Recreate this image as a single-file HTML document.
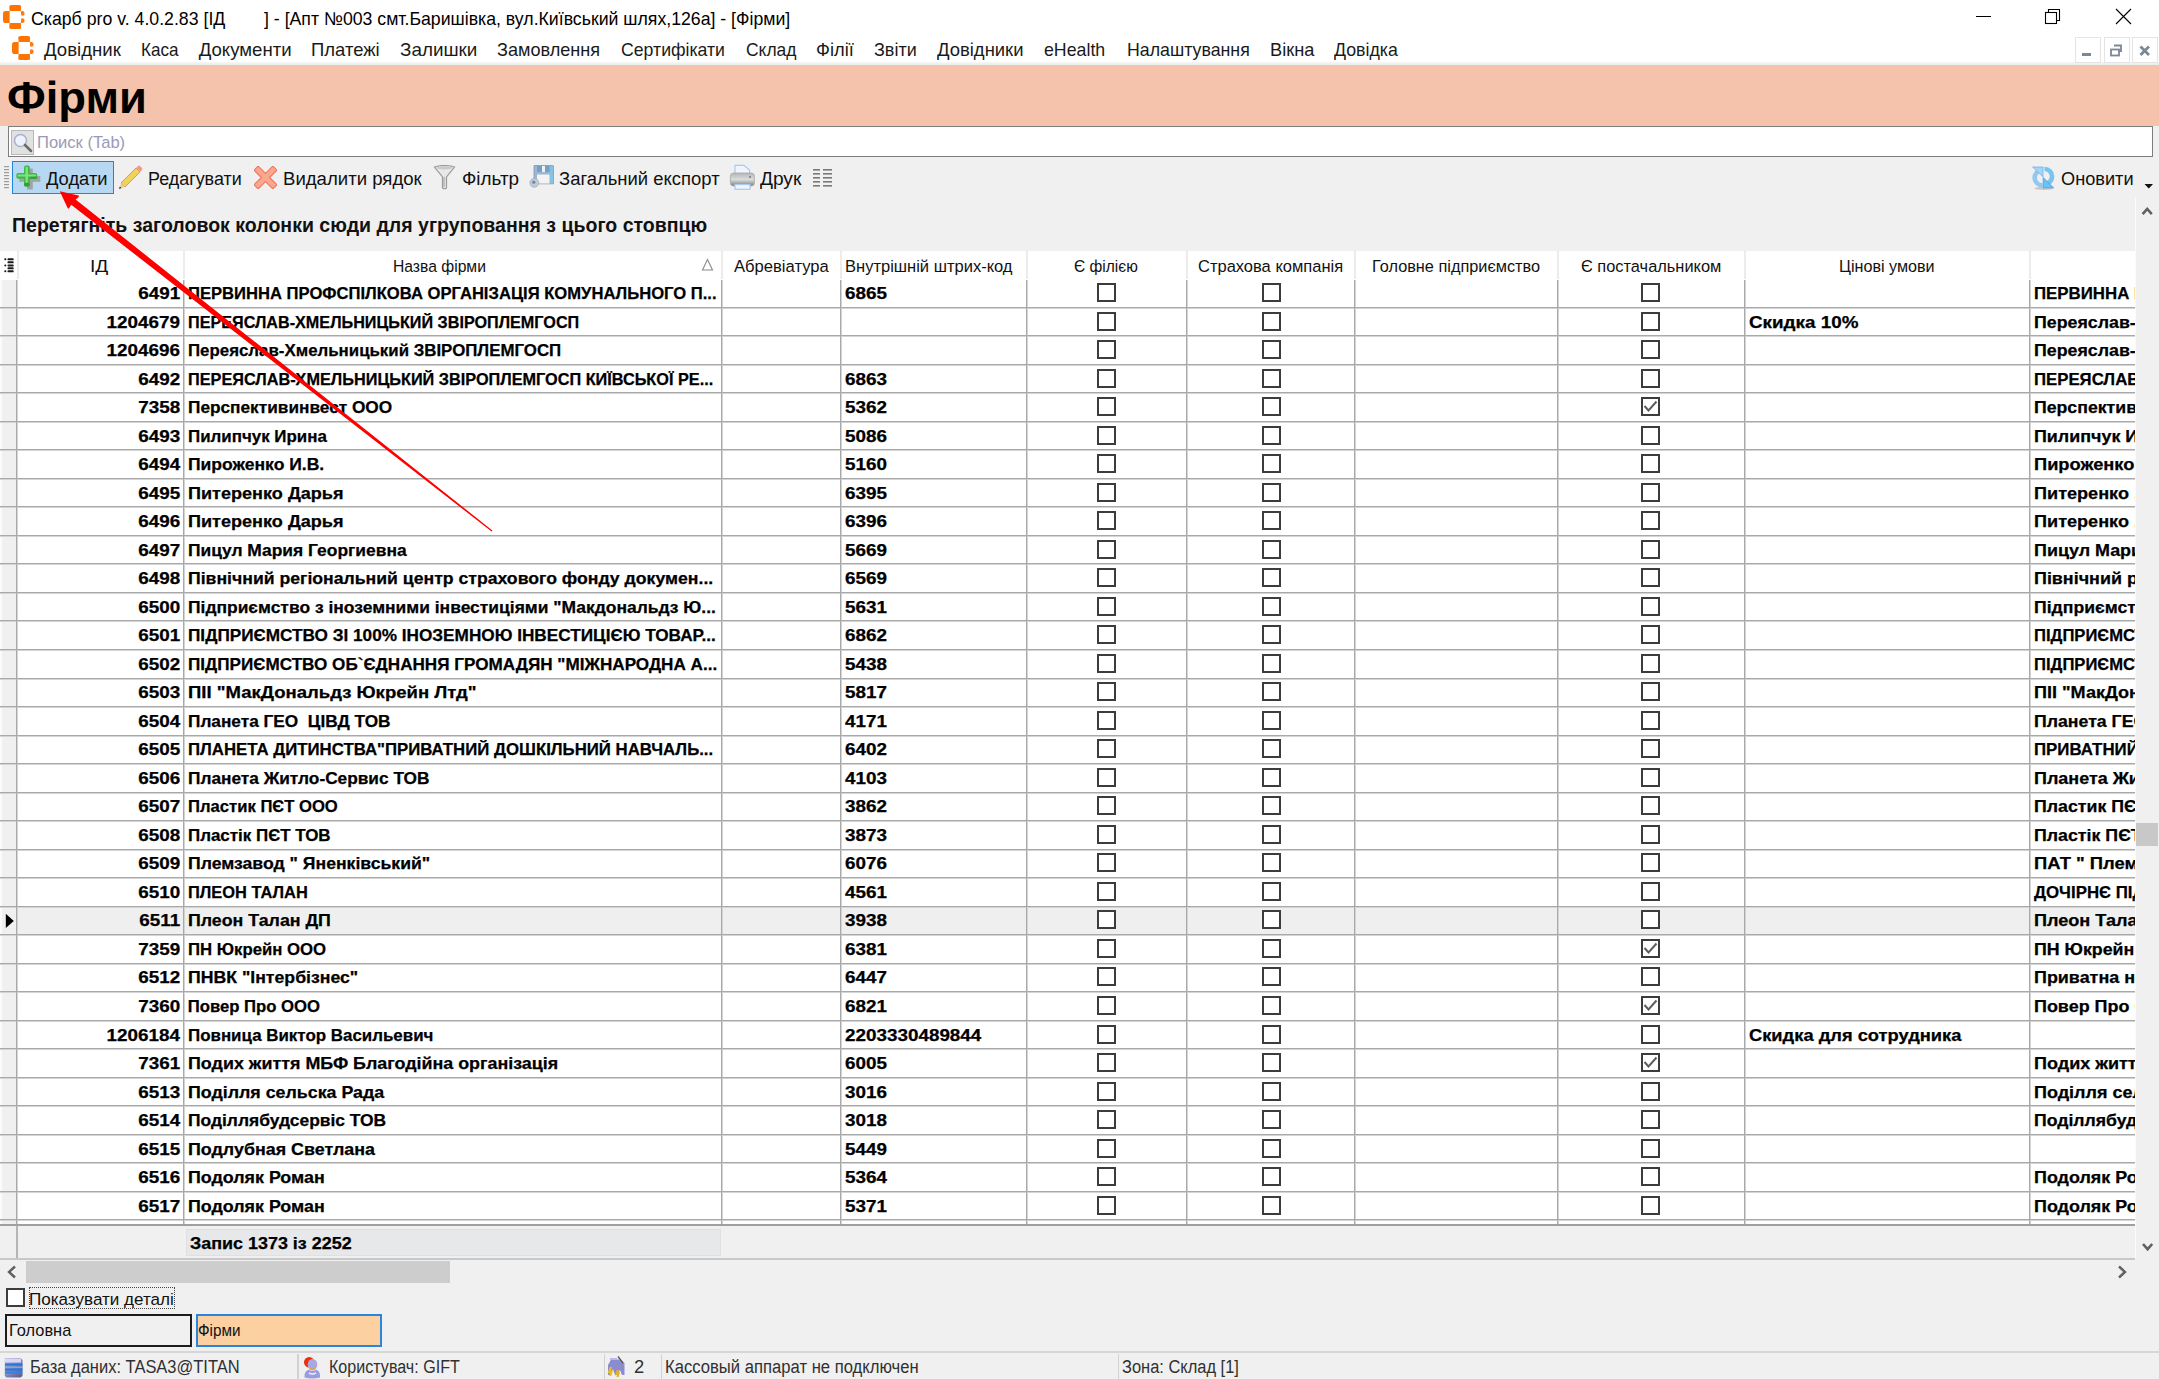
<!DOCTYPE html>
<html><head><meta charset="utf-8">
<style>
html,body{margin:0;padding:0}
body{width:2159px;height:1379px;position:relative;overflow:hidden;background:#f0f0f0;font-family:"Liberation Sans",sans-serif;color:#000}
.t{position:absolute;white-space:pre;line-height:1;transform-origin:0 0}
.b{-webkit-text-stroke:0.25px #000}
.a{position:absolute}
</style></head><body>
<!-- title + menu white -->
<div class="a" style="left:0;top:0;width:2159px;height:62px;background:#fff"></div>
<div class="a" style="left:0;top:62px;width:2159px;height:3px;background:linear-gradient(#f6f6f6,#ececec)"></div>
<!-- app icons -->
<svg class="a" style="left:3px;top:4.8px" width="22" height="25" viewBox="0 0 22 25">
 <path d="M6.6 6 L6.3 1.6 Q6.4 0 8.3 0 H16.2 Q18.1 0 18.1 1.6 L17.9 6 Z" fill="#ff7300"/>
 <path d="M6.6 6.1 V18 H2.6 Q0 18 0 15.2 V8.9 Q0 6.1 2.6 6.1 Z" fill="#ff7300"/>
 <path d="M6.6 18.1 L6.3 22.5 Q6.4 24 8.3 24 H16.2 Q18.1 24 18.1 22.5 L17.9 18.1 Z" fill="#ff7300"/>
 <path d="M18 6.1 H19.3 Q21.6 6.1 21.6 8.4 Q21.6 10.7 19.4 10.7 Q18 10.7 18 9.5 Z" fill="#ff7a10"/>
 <path d="M18 18 H19.3 Q21.6 18 21.6 15.7 Q21.6 13.3 19.4 13.3 Q18 13.3 18 14.6 Z" fill="#ff7a10"/>
</svg>
<svg class="a" style="left:11.9px;top:36.3px" width="22" height="25" viewBox="0 0 22 25">
 <path d="M6.6 6 L6.3 1.6 Q6.4 0 8.3 0 H16.2 Q18.1 0 18.1 1.6 L17.9 6 Z" fill="#ff7300"/>
 <path d="M6.6 6.1 V18 H2.6 Q0 18 0 15.2 V8.9 Q0 6.1 2.6 6.1 Z" fill="#ff7300"/>
 <path d="M6.6 18.1 L6.3 22.5 Q6.4 24 8.3 24 H16.2 Q18.1 24 18.1 22.5 L17.9 18.1 Z" fill="#ff7300"/>
 <path d="M18 6.1 H19.3 Q21.6 6.1 21.6 8.4 Q21.6 10.7 19.4 10.7 Q18 10.7 18 9.5 Z" fill="#ff7a10"/>
 <path d="M18 18 H19.3 Q21.6 18 21.6 15.7 Q21.6 13.3 19.4 13.3 Q18 13.3 18 14.6 Z" fill="#ff7a10"/>
</svg>
<!-- window controls -->
<div class="a" style="left:1976px;top:16px;width:15px;height:1.2px;background:#000"></div>
<svg class="a" style="left:2044px;top:8px" width="18" height="18" viewBox="0 0 18 18"><rect x="1.5" y="4.5" width="11" height="11" fill="none" stroke="#000" stroke-width="1.1"/><path d="M4.5 4.5 V1.5 H15.5 V12.5 H12.5" fill="none" stroke="#000" stroke-width="1.1"/></svg>
<svg class="a" style="left:2115px;top:8px" width="18" height="18" viewBox="0 0 18 18"><path d="M1 1 L16 16 M16 1 L1 16" stroke="#000" stroke-width="1.1"/></svg>
<!-- MDI buttons -->
<div class="a" style="left:2075px;top:37px;width:26px;height:26px;box-sizing:border-box;border:1px solid #e4e4e4;background:#fff"></div>
<div class="a" style="left:2103.5px;top:37px;width:26px;height:26px;box-sizing:border-box;border:1px solid #e4e4e4;background:#fff"></div>
<div class="a" style="left:2132px;top:37px;width:26px;height:26px;box-sizing:border-box;border:1px solid #e4e4e4;background:#fff"></div>
<div class="a" style="left:2082px;top:52.8px;width:9px;height:3.2px;background:#7a8794"></div>
<svg class="a" style="left:2108px;top:43.5px" width="16" height="16" viewBox="0 0 16 16"><path d="M6 1.5 H13 V7 H11" fill="none" stroke="#7a8794" stroke-width="1.8"/><rect x="3" y="5.5" width="8" height="6" fill="none" stroke="#7a8794" stroke-width="1.8"/></svg>
<svg class="a" style="left:2137px;top:43px" width="16" height="16" viewBox="0 0 16 16"><path d="M3.5 3.5 L12 12 M12 3.5 L3.5 12" stroke="#7a8794" stroke-width="2.8"/></svg>
<!-- salmon band -->
<div class="a" style="left:0;top:65px;width:2159px;height:61px;background:#f5c3ab"></div>
<!-- search box -->
<div class="a" style="left:7.5px;top:126.2px;width:2145px;height:31.3px;box-sizing:border-box;border:1.5px solid #7d7d7d;background:#fff"></div>
<div class="a" style="left:11px;top:130px;width:23px;height:24.5px;box-sizing:border-box;border:1px solid #b8b8b8;background:#e1e1e1"></div>
<svg class="a" style="left:12px;top:132px" width="22" height="22" viewBox="0 0 22 22"><circle cx="8.5" cy="8.5" r="6" fill="#eef2ff" stroke="#a9b4c8" stroke-width="1.6"/><path d="M13 13 L19 19" stroke="#6b6b6b" stroke-width="2.6" stroke-linecap="round"/></svg>
<!-- toolbar gripper -->
<svg class="a" style="left:4px;top:165px" width="6" height="24" viewBox="0 0 6 24"><g fill="#9a9a9a"><rect x="0" y="1" width="5" height="1.2"/><rect x="0" y="4" width="5" height="1.2"/><rect x="0" y="7" width="5" height="1.2"/><rect x="0" y="10" width="5" height="1.2"/><rect x="0" y="13" width="5" height="1.2"/><rect x="0" y="16" width="5" height="1.2"/><rect x="0" y="19" width="5" height="1.2"/><rect x="0" y="22" width="5" height="1.2"/></g></svg>
<!-- Додати button highlight -->
<div class="a" style="left:12.3px;top:161.2px;width:101.5px;height:32.4px;box-sizing:border-box;border:1.6px solid #1f86de;background:#b6d8f3"></div>
<!-- plus icon -->
<svg class="a" style="left:16px;top:165px" width="26" height="26" viewBox="0 0 26 26">
 <g fill="#a3a3a3"><rect x="3.3" y="11" width="21" height="5.8"/><rect x="11" y="3.6" width="5.8" height="20.8"/></g>
 <g fill="#43b84a"><rect x="0.3" y="8" width="21" height="5.8" rx="2"/><rect x="8" y="0.6" width="5.8" height="20.8" rx="2"/></g>
 <g fill="#7fe282"><rect x="1.6" y="9.4" width="18.4" height="2.2" rx="1"/><rect x="9.5" y="1.8" width="2.4" height="16" rx="1"/></g>
 <g fill="#2a9630" opacity="0.7"><rect x="8" y="18" width="5.8" height="3.4" rx="1.5"/><rect x="13.8" y="11.8" width="7.5" height="2" rx="1"/></g>
</svg>
<!-- pencil -->
<svg class="a" style="left:117px;top:164px" width="27" height="27" viewBox="0 0 27 27">
 <path d="M4 19 L19 4 L23 8 L8 23 Z" fill="#f2d25a" stroke="#c9a83a" stroke-width="1"/>
 <path d="M19 4 L21 2 Q22 1.2 23 2 L25 4 Q25.8 5 25 6 L23 8Z" fill="#f29a8a"/>
 <path d="M4 19 L8 23 L2 25 Z" fill="#f1c9a5"/><path d="M2.8 22.5 L4.5 24 L2 25Z" fill="#333"/>
</svg>
<!-- delete X -->
<svg class="a" style="left:254px;top:166px" width="23" height="23" viewBox="0 0 23 23"><g transform="rotate(45 11.5 11.5)"><path d="M8.6 -1.8 H14.4 V8.6 H24.8 V14.4 H14.4 V24.8 H8.6 V14.4 H-1.8 V8.6 H8.6 Z" fill="#f9a88e" stroke="#ea7a60" stroke-width="1.1" stroke-linejoin="round"/></g></svg>
<!-- funnel -->
<svg class="a" style="left:433px;top:165px" width="23" height="25" viewBox="0 0 23 25"><path d="M1.5 2 Q11.5 -1 21.5 2 L13.5 12 V23 Q11.5 24.5 9.5 23 V12 Z" fill="#e8e8e8" stroke="#9a9a9a" stroke-width="1.2"/><ellipse cx="11.5" cy="2.8" rx="8" ry="1.6" fill="#c9c9c9"/><path d="M11 12 V22" stroke="#c0c0c0" stroke-width="2"/></svg>
<!-- export floppy -->
<svg class="a" style="left:528px;top:164px" width="26" height="26" viewBox="0 0 26 26">
 <path d="M6 1.5 H24.5 Q25.5 1.5 25.5 2.5 V19.8 H6 Z" fill="#9fb6d2" stroke="#7f97b8" stroke-width="0.8"/>
 <rect x="22" y="2.5" width="3.2" height="17" fill="#86c3e2"/>
 <rect x="9" y="2" width="12.5" height="6" fill="#6fa0d0"/><rect x="14" y="2" width="3" height="6" fill="#f2f2f2"/>
 <rect x="9" y="10.5" width="12.5" height="9" fill="#f3f3f3"/>
 <circle cx="6.3" cy="18.8" r="4.4" fill="#c5cbd0" stroke="#a5adb3" stroke-width="0.8"/><circle cx="5.8" cy="18.2" r="1.6" fill="#5a8fc0"/>
</svg>
<!-- printer -->
<svg class="a" style="left:729px;top:164px" width="27" height="27" viewBox="0 0 27 27">
 <defs><linearGradient id="pg" x1="0" y1="0" x2="0" y2="1"><stop offset="0" stop-color="#b5b5b5"/><stop offset="0.5" stop-color="#dcdcdc"/><stop offset="1" stop-color="#7d7d7d"/></linearGradient></defs>
 <path d="M6 1.4 H15 L20.5 6 V10 H6Z" fill="#eef5ff" stroke="#a9c9ee" stroke-width="1.2"/>
 <rect x="1.4" y="9" width="24" height="13" rx="3.2" fill="url(#pg)" stroke="#a8a8a8" stroke-width="0.8"/>
 <circle cx="21" cy="13" r="1" fill="#777"/>
 <rect x="6" y="20.5" width="15" height="4.8" fill="#eef5ff" stroke="#a9c9ee" stroke-width="1.2"/>
</svg>
<!-- columns icon -->
<svg class="a" style="left:813px;top:168px" width="20" height="20" viewBox="0 0 20 20"><g fill="#7a7a7a"><rect x="0" y="1" width="7" height="1.6"/><rect x="0" y="5" width="7" height="1.6"/><rect x="0" y="9" width="7" height="1.6"/><rect x="0" y="13" width="7" height="1.6"/><rect x="0" y="17" width="7" height="1.6"/><rect x="10" y="1" width="9" height="1.6"/><rect x="10" y="5" width="9" height="1.6"/><rect x="10" y="9" width="9" height="1.6"/><rect x="10" y="13" width="9" height="1.6"/><rect x="10" y="17" width="9" height="1.6"/></g></svg>
<!-- refresh -->
<svg class="a" style="left:2026px;top:160px" width="34" height="34" viewBox="0 0 34 34">
 <ellipse cx="18" cy="28.3" rx="9.5" ry="1.6" fill="#c8c8c8"/>
 <path d="M15.5 10.2 A7.2 7.4 0 0 0 16.5 25.2" fill="none" stroke="#94c8ee" stroke-width="4.6"/>
 <path d="M6.6 7 H17 V16.8 Z" fill="#a3d6f6" stroke="#7ab2e0" stroke-width="0.8"/>
 <path d="M18.5 9 A7.2 7.4 0 0 1 19 24" fill="none" stroke="#78c4f2" stroke-width="4.6"/>
 <path d="M17.2 17.5 V27.8 H27.6 Z" fill="#64c6f8" stroke="#5d98cc" stroke-width="0.8"/>
</svg>
<!-- toolbar overflow -->
<svg class="a" style="left:2143px;top:181px" width="12" height="9" viewBox="0 0 12 9"><path d="M1.5 3 H10 L5.75 7.5Z" fill="#111"/></svg>
<!-- vertical scrollbar -->
<div class="a" style="left:2134.5px;top:197px;width:1.5px;height:1062px;background:#fbfbfb"></div>
<svg class="a" style="left:2139px;top:204px" width="16" height="14" viewBox="0 0 16 14"><path d="M3.6 10.2 L8.2 5 L12.8 10.2" fill="none" stroke="#606060" stroke-width="2.6"/></svg>
<div class="a" style="left:2136px;top:822.8px;width:22px;height:23.5px;background:#c8c8c8"></div>
<svg class="a" style="left:2139px;top:1240px" width="16" height="14" viewBox="0 0 16 14"><path d="M4 4 L8.6 9.2 L13.2 4" fill="none" stroke="#606060" stroke-width="2.6"/></svg>
<div style="position:absolute;left:0;top:251px;width:2135px;height:29px;background:#fff"></div>
<div style="position:absolute;left:0;top:280px;width:2135px;height:944px;background:#fff"></div>
<div style="position:absolute;left:0;top:280px;width:17px;height:944px;background:#f0f0f0"></div>
<div style="position:absolute;left:18px;top:907.44px;width:2117px;height:28.52px;background:#efefef"></div>
<div style="position:absolute;left:0;top:280px;width:1.5px;height:944px;background:#fbfbfb"></div>
<div style="position:absolute;left:0;top:308px;width:2135px;height:1px;background:#d4d4d4"></div>
<div style="position:absolute;left:0;top:336px;width:2135px;height:1px;background:#d4d4d4"></div>
<div style="position:absolute;left:0;top:365px;width:2135px;height:1px;background:#d4d4d4"></div>
<div style="position:absolute;left:0;top:393px;width:2135px;height:1px;background:#d4d4d4"></div>
<div style="position:absolute;left:0;top:422px;width:2135px;height:1px;background:#d4d4d4"></div>
<div style="position:absolute;left:0;top:450px;width:2135px;height:1px;background:#d4d4d4"></div>
<div style="position:absolute;left:0;top:479px;width:2135px;height:1px;background:#d4d4d4"></div>
<div style="position:absolute;left:0;top:507px;width:2135px;height:1px;background:#d4d4d4"></div>
<div style="position:absolute;left:0;top:536px;width:2135px;height:1px;background:#d4d4d4"></div>
<div style="position:absolute;left:0;top:564px;width:2135px;height:1px;background:#d4d4d4"></div>
<div style="position:absolute;left:0;top:593px;width:2135px;height:1px;background:#d4d4d4"></div>
<div style="position:absolute;left:0;top:621px;width:2135px;height:1px;background:#d4d4d4"></div>
<div style="position:absolute;left:0;top:650px;width:2135px;height:1px;background:#d4d4d4"></div>
<div style="position:absolute;left:0;top:679px;width:2135px;height:1px;background:#d4d4d4"></div>
<div style="position:absolute;left:0;top:707px;width:2135px;height:1px;background:#d4d4d4"></div>
<div style="position:absolute;left:0;top:736px;width:2135px;height:1px;background:#d4d4d4"></div>
<div style="position:absolute;left:0;top:764px;width:2135px;height:1px;background:#d4d4d4"></div>
<div style="position:absolute;left:0;top:793px;width:2135px;height:1px;background:#d4d4d4"></div>
<div style="position:absolute;left:0;top:821px;width:2135px;height:1px;background:#d4d4d4"></div>
<div style="position:absolute;left:0;top:850px;width:2135px;height:1px;background:#d4d4d4"></div>
<div style="position:absolute;left:0;top:878px;width:2135px;height:1px;background:#d4d4d4"></div>
<div style="position:absolute;left:0;top:907px;width:2135px;height:1px;background:#d4d4d4"></div>
<div style="position:absolute;left:0;top:935px;width:2135px;height:1px;background:#d4d4d4"></div>
<div style="position:absolute;left:0;top:964px;width:2135px;height:1px;background:#d4d4d4"></div>
<div style="position:absolute;left:0;top:992px;width:2135px;height:1px;background:#d4d4d4"></div>
<div style="position:absolute;left:0;top:1021px;width:2135px;height:1px;background:#d4d4d4"></div>
<div style="position:absolute;left:0;top:1049px;width:2135px;height:1px;background:#d4d4d4"></div>
<div style="position:absolute;left:0;top:1078px;width:2135px;height:1px;background:#d4d4d4"></div>
<div style="position:absolute;left:0;top:1106px;width:2135px;height:1px;background:#d4d4d4"></div>
<div style="position:absolute;left:0;top:1135px;width:2135px;height:1px;background:#d4d4d4"></div>
<div style="position:absolute;left:0;top:1163px;width:2135px;height:1px;background:#d4d4d4"></div>
<div style="position:absolute;left:0;top:1192px;width:2135px;height:1px;background:#d4d4d4"></div>
<div style="position:absolute;left:0;top:1220px;width:2135px;height:1px;background:#d4d4d4"></div>
<div style="position:absolute;left:0;top:1249px;width:2135px;height:1px;background:#d4d4d4"></div>
<div style="position:absolute;left:17px;top:280px;width:1px;height:944px;background:#d4d4d4"></div>
<div style="position:absolute;left:184px;top:280px;width:1px;height:944px;background:#d4d4d4"></div>
<div style="position:absolute;left:722px;top:280px;width:1px;height:944px;background:#d4d4d4"></div>
<div style="position:absolute;left:841px;top:280px;width:1px;height:944px;background:#d4d4d4"></div>
<div style="position:absolute;left:1027px;top:280px;width:1px;height:944px;background:#d4d4d4"></div>
<div style="position:absolute;left:1187px;top:280px;width:1px;height:944px;background:#d4d4d4"></div>
<div style="position:absolute;left:1355px;top:280px;width:1px;height:944px;background:#d4d4d4"></div>
<div style="position:absolute;left:1558px;top:280px;width:1px;height:944px;background:#d4d4d4"></div>
<div style="position:absolute;left:1745px;top:280px;width:1px;height:944px;background:#d4d4d4"></div>
<div style="position:absolute;left:2030px;top:280px;width:1px;height:944px;background:#d4d4d4"></div>
<div style="position:absolute;left:0;top:307px;width:2135px;height:1px;background:#a9a9a9"></div>
<div style="position:absolute;left:0;top:335px;width:2135px;height:1px;background:#a9a9a9"></div>
<div style="position:absolute;left:0;top:364px;width:2135px;height:1px;background:#a9a9a9"></div>
<div style="position:absolute;left:0;top:392px;width:2135px;height:1px;background:#a9a9a9"></div>
<div style="position:absolute;left:0;top:421px;width:2135px;height:1px;background:#a9a9a9"></div>
<div style="position:absolute;left:0;top:449px;width:2135px;height:1px;background:#a9a9a9"></div>
<div style="position:absolute;left:0;top:478px;width:2135px;height:1px;background:#a9a9a9"></div>
<div style="position:absolute;left:0;top:506px;width:2135px;height:1px;background:#a9a9a9"></div>
<div style="position:absolute;left:0;top:535px;width:2135px;height:1px;background:#a9a9a9"></div>
<div style="position:absolute;left:0;top:563px;width:2135px;height:1px;background:#a9a9a9"></div>
<div style="position:absolute;left:0;top:592px;width:2135px;height:1px;background:#a9a9a9"></div>
<div style="position:absolute;left:0;top:620px;width:2135px;height:1px;background:#a9a9a9"></div>
<div style="position:absolute;left:0;top:649px;width:2135px;height:1px;background:#a9a9a9"></div>
<div style="position:absolute;left:0;top:678px;width:2135px;height:1px;background:#a9a9a9"></div>
<div style="position:absolute;left:0;top:706px;width:2135px;height:1px;background:#a9a9a9"></div>
<div style="position:absolute;left:0;top:735px;width:2135px;height:1px;background:#a9a9a9"></div>
<div style="position:absolute;left:0;top:763px;width:2135px;height:1px;background:#a9a9a9"></div>
<div style="position:absolute;left:0;top:792px;width:2135px;height:1px;background:#a9a9a9"></div>
<div style="position:absolute;left:0;top:820px;width:2135px;height:1px;background:#a9a9a9"></div>
<div style="position:absolute;left:0;top:849px;width:2135px;height:1px;background:#a9a9a9"></div>
<div style="position:absolute;left:0;top:877px;width:2135px;height:1px;background:#a9a9a9"></div>
<div style="position:absolute;left:0;top:906px;width:2135px;height:1px;background:#a9a9a9"></div>
<div style="position:absolute;left:0;top:934px;width:2135px;height:1px;background:#a9a9a9"></div>
<div style="position:absolute;left:0;top:963px;width:2135px;height:1px;background:#a9a9a9"></div>
<div style="position:absolute;left:0;top:991px;width:2135px;height:1px;background:#a9a9a9"></div>
<div style="position:absolute;left:0;top:1020px;width:2135px;height:1px;background:#a9a9a9"></div>
<div style="position:absolute;left:0;top:1048px;width:2135px;height:1px;background:#a9a9a9"></div>
<div style="position:absolute;left:0;top:1077px;width:2135px;height:1px;background:#a9a9a9"></div>
<div style="position:absolute;left:0;top:1105px;width:2135px;height:1px;background:#a9a9a9"></div>
<div style="position:absolute;left:0;top:1134px;width:2135px;height:1px;background:#a9a9a9"></div>
<div style="position:absolute;left:0;top:1162px;width:2135px;height:1px;background:#a9a9a9"></div>
<div style="position:absolute;left:0;top:1191px;width:2135px;height:1px;background:#a9a9a9"></div>
<div style="position:absolute;left:0;top:1219px;width:2135px;height:1px;background:#a9a9a9"></div>
<div style="position:absolute;left:0;top:1248px;width:2135px;height:1px;background:#a9a9a9"></div>
<div style="position:absolute;left:16px;top:280px;width:1px;height:944px;background:#a9a9a9"></div>
<div style="position:absolute;left:183px;top:280px;width:1px;height:944px;background:#a9a9a9"></div>
<div style="position:absolute;left:721px;top:280px;width:1px;height:944px;background:#a9a9a9"></div>
<div style="position:absolute;left:840px;top:280px;width:1px;height:944px;background:#a9a9a9"></div>
<div style="position:absolute;left:1026px;top:280px;width:1px;height:944px;background:#a9a9a9"></div>
<div style="position:absolute;left:1186px;top:280px;width:1px;height:944px;background:#a9a9a9"></div>
<div style="position:absolute;left:1354px;top:280px;width:1px;height:944px;background:#a9a9a9"></div>
<div style="position:absolute;left:1557px;top:280px;width:1px;height:944px;background:#a9a9a9"></div>
<div style="position:absolute;left:1744px;top:280px;width:1px;height:944px;background:#a9a9a9"></div>
<div style="position:absolute;left:2029px;top:280px;width:1px;height:944px;background:#a9a9a9"></div>
<div style="position:absolute;left:183px;top:251px;width:2px;height:28px;background:#ececec"></div>
<div style="position:absolute;left:721px;top:251px;width:2px;height:28px;background:#ececec"></div>
<div style="position:absolute;left:840px;top:251px;width:2px;height:28px;background:#ececec"></div>
<div style="position:absolute;left:1026px;top:251px;width:2px;height:28px;background:#ececec"></div>
<div style="position:absolute;left:1186px;top:251px;width:2px;height:28px;background:#ececec"></div>
<div style="position:absolute;left:1354px;top:251px;width:2px;height:28px;background:#ececec"></div>
<div style="position:absolute;left:1557px;top:251px;width:2px;height:28px;background:#ececec"></div>
<div style="position:absolute;left:1744px;top:251px;width:2px;height:28px;background:#ececec"></div>
<div style="position:absolute;left:2029px;top:251px;width:2px;height:28px;background:#ececec"></div>
<div style="position:absolute;left:0;top:1224px;width:2135px;height:2px;background:#a0a0a0"></div>
<div style="position:absolute;left:0;top:1226px;width:2135px;height:32px;background:#f0f0f0"></div>
<div style="position:absolute;left:16px;top:1226px;width:2px;height:32px;background:#b6b6b6"></div>
<div style="position:absolute;left:186px;top:1228.5px;width:535px;height:27px;background:#e6e8e9;border:1px solid #e0e0e0;box-sizing:border-box"></div>
<div style="position:absolute;left:0;top:1258px;width:2135px;height:1.5px;background:#c8c8c8"></div>
<!-- header column chooser icon -->
<svg class="a" style="left:0;top:250px" width="17" height="30" viewBox="0 0 17 30"><g fill="#1a1a1a"><rect x="4.3" y="8.3" width="2" height="2" rx="0.8"/><rect x="4.3" y="14.4" width="2" height="2" rx="0.8"/><rect x="4.3" y="20.3" width="2" height="2" rx="0.8"/><rect x="7.5" y="8.3" width="6.2" height="2" rx="0.9"/><rect x="7.5" y="11.3" width="6.2" height="2" rx="0.9"/><rect x="7.5" y="14.4" width="6.2" height="2" rx="0.9"/><rect x="7.5" y="17.3" width="6.2" height="2" rx="0.9"/><rect x="7.5" y="20.3" width="6.2" height="2" rx="0.9"/></g></svg>
<div class="a" style="left:16.5px;top:251px;width:2px;height:28px;background:#ececec"></div>
<!-- sort triangle -->
<svg class="a" style="left:701px;top:258px" width="13" height="14" viewBox="0 0 13 14"><path d="M6.5 1.5 L11.5 12 H1.5Z" fill="none" stroke="#8a8a8a" stroke-width="1.1"/></svg>
<!-- selected row indicator -->
<svg class="a" style="left:4px;top:911px" width="12" height="19" viewBox="0 0 12 19"><path d="M1.8 2.8 L9.8 9.9 L1.8 17Z" fill="#000"/></svg>
<div style="position:absolute;left:1097px;top:283.00px;width:19px;height:19px;box-sizing:border-box;border:2px solid #3c3c3c;background:#fff"></div>
<div style="position:absolute;left:1261.5px;top:283.00px;width:19px;height:19px;box-sizing:border-box;border:2px solid #3c3c3c;background:#fff"></div>
<div style="position:absolute;left:1641px;top:283.00px;width:19px;height:19px;box-sizing:border-box;border:2px solid #3c3c3c;background:#fff"></div>
<div style="position:absolute;left:1097px;top:311.52px;width:19px;height:19px;box-sizing:border-box;border:2px solid #3c3c3c;background:#fff"></div>
<div style="position:absolute;left:1261.5px;top:311.52px;width:19px;height:19px;box-sizing:border-box;border:2px solid #3c3c3c;background:#fff"></div>
<div style="position:absolute;left:1641px;top:311.52px;width:19px;height:19px;box-sizing:border-box;border:2px solid #3c3c3c;background:#fff"></div>
<div style="position:absolute;left:1097px;top:340.04px;width:19px;height:19px;box-sizing:border-box;border:2px solid #3c3c3c;background:#fff"></div>
<div style="position:absolute;left:1261.5px;top:340.04px;width:19px;height:19px;box-sizing:border-box;border:2px solid #3c3c3c;background:#fff"></div>
<div style="position:absolute;left:1641px;top:340.04px;width:19px;height:19px;box-sizing:border-box;border:2px solid #3c3c3c;background:#fff"></div>
<div style="position:absolute;left:1097px;top:368.56px;width:19px;height:19px;box-sizing:border-box;border:2px solid #3c3c3c;background:#fff"></div>
<div style="position:absolute;left:1261.5px;top:368.56px;width:19px;height:19px;box-sizing:border-box;border:2px solid #3c3c3c;background:#fff"></div>
<div style="position:absolute;left:1641px;top:368.56px;width:19px;height:19px;box-sizing:border-box;border:2px solid #3c3c3c;background:#fff"></div>
<div style="position:absolute;left:1097px;top:397.08px;width:19px;height:19px;box-sizing:border-box;border:2px solid #3c3c3c;background:#fff"></div>
<div style="position:absolute;left:1261.5px;top:397.08px;width:19px;height:19px;box-sizing:border-box;border:2px solid #3c3c3c;background:#fff"></div>
<div style="position:absolute;left:1641px;top:397.08px;width:19px;height:19px;box-sizing:border-box;border:2px solid #3c3c3c;background:#fff"><svg width="19" height="19" style="position:absolute;left:-2px;top:-2px"><path d="M3.5 9 L7.5 13.5 L15.5 4.5" stroke="#5e5e5e" stroke-width="2" fill="none"/></svg></div>
<div style="position:absolute;left:1097px;top:425.60px;width:19px;height:19px;box-sizing:border-box;border:2px solid #3c3c3c;background:#fff"></div>
<div style="position:absolute;left:1261.5px;top:425.60px;width:19px;height:19px;box-sizing:border-box;border:2px solid #3c3c3c;background:#fff"></div>
<div style="position:absolute;left:1641px;top:425.60px;width:19px;height:19px;box-sizing:border-box;border:2px solid #3c3c3c;background:#fff"></div>
<div style="position:absolute;left:1097px;top:454.12px;width:19px;height:19px;box-sizing:border-box;border:2px solid #3c3c3c;background:#fff"></div>
<div style="position:absolute;left:1261.5px;top:454.12px;width:19px;height:19px;box-sizing:border-box;border:2px solid #3c3c3c;background:#fff"></div>
<div style="position:absolute;left:1641px;top:454.12px;width:19px;height:19px;box-sizing:border-box;border:2px solid #3c3c3c;background:#fff"></div>
<div style="position:absolute;left:1097px;top:482.64px;width:19px;height:19px;box-sizing:border-box;border:2px solid #3c3c3c;background:#fff"></div>
<div style="position:absolute;left:1261.5px;top:482.64px;width:19px;height:19px;box-sizing:border-box;border:2px solid #3c3c3c;background:#fff"></div>
<div style="position:absolute;left:1641px;top:482.64px;width:19px;height:19px;box-sizing:border-box;border:2px solid #3c3c3c;background:#fff"></div>
<div style="position:absolute;left:1097px;top:511.16px;width:19px;height:19px;box-sizing:border-box;border:2px solid #3c3c3c;background:#fff"></div>
<div style="position:absolute;left:1261.5px;top:511.16px;width:19px;height:19px;box-sizing:border-box;border:2px solid #3c3c3c;background:#fff"></div>
<div style="position:absolute;left:1641px;top:511.16px;width:19px;height:19px;box-sizing:border-box;border:2px solid #3c3c3c;background:#fff"></div>
<div style="position:absolute;left:1097px;top:539.68px;width:19px;height:19px;box-sizing:border-box;border:2px solid #3c3c3c;background:#fff"></div>
<div style="position:absolute;left:1261.5px;top:539.68px;width:19px;height:19px;box-sizing:border-box;border:2px solid #3c3c3c;background:#fff"></div>
<div style="position:absolute;left:1641px;top:539.68px;width:19px;height:19px;box-sizing:border-box;border:2px solid #3c3c3c;background:#fff"></div>
<div style="position:absolute;left:1097px;top:568.20px;width:19px;height:19px;box-sizing:border-box;border:2px solid #3c3c3c;background:#fff"></div>
<div style="position:absolute;left:1261.5px;top:568.20px;width:19px;height:19px;box-sizing:border-box;border:2px solid #3c3c3c;background:#fff"></div>
<div style="position:absolute;left:1641px;top:568.20px;width:19px;height:19px;box-sizing:border-box;border:2px solid #3c3c3c;background:#fff"></div>
<div style="position:absolute;left:1097px;top:596.72px;width:19px;height:19px;box-sizing:border-box;border:2px solid #3c3c3c;background:#fff"></div>
<div style="position:absolute;left:1261.5px;top:596.72px;width:19px;height:19px;box-sizing:border-box;border:2px solid #3c3c3c;background:#fff"></div>
<div style="position:absolute;left:1641px;top:596.72px;width:19px;height:19px;box-sizing:border-box;border:2px solid #3c3c3c;background:#fff"></div>
<div style="position:absolute;left:1097px;top:625.24px;width:19px;height:19px;box-sizing:border-box;border:2px solid #3c3c3c;background:#fff"></div>
<div style="position:absolute;left:1261.5px;top:625.24px;width:19px;height:19px;box-sizing:border-box;border:2px solid #3c3c3c;background:#fff"></div>
<div style="position:absolute;left:1641px;top:625.24px;width:19px;height:19px;box-sizing:border-box;border:2px solid #3c3c3c;background:#fff"></div>
<div style="position:absolute;left:1097px;top:653.76px;width:19px;height:19px;box-sizing:border-box;border:2px solid #3c3c3c;background:#fff"></div>
<div style="position:absolute;left:1261.5px;top:653.76px;width:19px;height:19px;box-sizing:border-box;border:2px solid #3c3c3c;background:#fff"></div>
<div style="position:absolute;left:1641px;top:653.76px;width:19px;height:19px;box-sizing:border-box;border:2px solid #3c3c3c;background:#fff"></div>
<div style="position:absolute;left:1097px;top:682.28px;width:19px;height:19px;box-sizing:border-box;border:2px solid #3c3c3c;background:#fff"></div>
<div style="position:absolute;left:1261.5px;top:682.28px;width:19px;height:19px;box-sizing:border-box;border:2px solid #3c3c3c;background:#fff"></div>
<div style="position:absolute;left:1641px;top:682.28px;width:19px;height:19px;box-sizing:border-box;border:2px solid #3c3c3c;background:#fff"></div>
<div style="position:absolute;left:1097px;top:710.80px;width:19px;height:19px;box-sizing:border-box;border:2px solid #3c3c3c;background:#fff"></div>
<div style="position:absolute;left:1261.5px;top:710.80px;width:19px;height:19px;box-sizing:border-box;border:2px solid #3c3c3c;background:#fff"></div>
<div style="position:absolute;left:1641px;top:710.80px;width:19px;height:19px;box-sizing:border-box;border:2px solid #3c3c3c;background:#fff"></div>
<div style="position:absolute;left:1097px;top:739.32px;width:19px;height:19px;box-sizing:border-box;border:2px solid #3c3c3c;background:#fff"></div>
<div style="position:absolute;left:1261.5px;top:739.32px;width:19px;height:19px;box-sizing:border-box;border:2px solid #3c3c3c;background:#fff"></div>
<div style="position:absolute;left:1641px;top:739.32px;width:19px;height:19px;box-sizing:border-box;border:2px solid #3c3c3c;background:#fff"></div>
<div style="position:absolute;left:1097px;top:767.84px;width:19px;height:19px;box-sizing:border-box;border:2px solid #3c3c3c;background:#fff"></div>
<div style="position:absolute;left:1261.5px;top:767.84px;width:19px;height:19px;box-sizing:border-box;border:2px solid #3c3c3c;background:#fff"></div>
<div style="position:absolute;left:1641px;top:767.84px;width:19px;height:19px;box-sizing:border-box;border:2px solid #3c3c3c;background:#fff"></div>
<div style="position:absolute;left:1097px;top:796.36px;width:19px;height:19px;box-sizing:border-box;border:2px solid #3c3c3c;background:#fff"></div>
<div style="position:absolute;left:1261.5px;top:796.36px;width:19px;height:19px;box-sizing:border-box;border:2px solid #3c3c3c;background:#fff"></div>
<div style="position:absolute;left:1641px;top:796.36px;width:19px;height:19px;box-sizing:border-box;border:2px solid #3c3c3c;background:#fff"></div>
<div style="position:absolute;left:1097px;top:824.88px;width:19px;height:19px;box-sizing:border-box;border:2px solid #3c3c3c;background:#fff"></div>
<div style="position:absolute;left:1261.5px;top:824.88px;width:19px;height:19px;box-sizing:border-box;border:2px solid #3c3c3c;background:#fff"></div>
<div style="position:absolute;left:1641px;top:824.88px;width:19px;height:19px;box-sizing:border-box;border:2px solid #3c3c3c;background:#fff"></div>
<div style="position:absolute;left:1097px;top:853.40px;width:19px;height:19px;box-sizing:border-box;border:2px solid #3c3c3c;background:#fff"></div>
<div style="position:absolute;left:1261.5px;top:853.40px;width:19px;height:19px;box-sizing:border-box;border:2px solid #3c3c3c;background:#fff"></div>
<div style="position:absolute;left:1641px;top:853.40px;width:19px;height:19px;box-sizing:border-box;border:2px solid #3c3c3c;background:#fff"></div>
<div style="position:absolute;left:1097px;top:881.92px;width:19px;height:19px;box-sizing:border-box;border:2px solid #3c3c3c;background:#fff"></div>
<div style="position:absolute;left:1261.5px;top:881.92px;width:19px;height:19px;box-sizing:border-box;border:2px solid #3c3c3c;background:#fff"></div>
<div style="position:absolute;left:1641px;top:881.92px;width:19px;height:19px;box-sizing:border-box;border:2px solid #3c3c3c;background:#fff"></div>
<div style="position:absolute;left:1097px;top:910.44px;width:19px;height:19px;box-sizing:border-box;border:2px solid #3c3c3c;background:#fff"></div>
<div style="position:absolute;left:1261.5px;top:910.44px;width:19px;height:19px;box-sizing:border-box;border:2px solid #3c3c3c;background:#fff"></div>
<div style="position:absolute;left:1641px;top:910.44px;width:19px;height:19px;box-sizing:border-box;border:2px solid #3c3c3c;background:#fff"></div>
<div style="position:absolute;left:1097px;top:938.96px;width:19px;height:19px;box-sizing:border-box;border:2px solid #3c3c3c;background:#fff"></div>
<div style="position:absolute;left:1261.5px;top:938.96px;width:19px;height:19px;box-sizing:border-box;border:2px solid #3c3c3c;background:#fff"></div>
<div style="position:absolute;left:1641px;top:938.96px;width:19px;height:19px;box-sizing:border-box;border:2px solid #3c3c3c;background:#fff"><svg width="19" height="19" style="position:absolute;left:-2px;top:-2px"><path d="M3.5 9 L7.5 13.5 L15.5 4.5" stroke="#5e5e5e" stroke-width="2" fill="none"/></svg></div>
<div style="position:absolute;left:1097px;top:967.48px;width:19px;height:19px;box-sizing:border-box;border:2px solid #3c3c3c;background:#fff"></div>
<div style="position:absolute;left:1261.5px;top:967.48px;width:19px;height:19px;box-sizing:border-box;border:2px solid #3c3c3c;background:#fff"></div>
<div style="position:absolute;left:1641px;top:967.48px;width:19px;height:19px;box-sizing:border-box;border:2px solid #3c3c3c;background:#fff"></div>
<div style="position:absolute;left:1097px;top:996.00px;width:19px;height:19px;box-sizing:border-box;border:2px solid #3c3c3c;background:#fff"></div>
<div style="position:absolute;left:1261.5px;top:996.00px;width:19px;height:19px;box-sizing:border-box;border:2px solid #3c3c3c;background:#fff"></div>
<div style="position:absolute;left:1641px;top:996.00px;width:19px;height:19px;box-sizing:border-box;border:2px solid #3c3c3c;background:#fff"><svg width="19" height="19" style="position:absolute;left:-2px;top:-2px"><path d="M3.5 9 L7.5 13.5 L15.5 4.5" stroke="#5e5e5e" stroke-width="2" fill="none"/></svg></div>
<div style="position:absolute;left:1097px;top:1024.52px;width:19px;height:19px;box-sizing:border-box;border:2px solid #3c3c3c;background:#fff"></div>
<div style="position:absolute;left:1261.5px;top:1024.52px;width:19px;height:19px;box-sizing:border-box;border:2px solid #3c3c3c;background:#fff"></div>
<div style="position:absolute;left:1641px;top:1024.52px;width:19px;height:19px;box-sizing:border-box;border:2px solid #3c3c3c;background:#fff"></div>
<div style="position:absolute;left:1097px;top:1053.04px;width:19px;height:19px;box-sizing:border-box;border:2px solid #3c3c3c;background:#fff"></div>
<div style="position:absolute;left:1261.5px;top:1053.04px;width:19px;height:19px;box-sizing:border-box;border:2px solid #3c3c3c;background:#fff"></div>
<div style="position:absolute;left:1641px;top:1053.04px;width:19px;height:19px;box-sizing:border-box;border:2px solid #3c3c3c;background:#fff"><svg width="19" height="19" style="position:absolute;left:-2px;top:-2px"><path d="M3.5 9 L7.5 13.5 L15.5 4.5" stroke="#5e5e5e" stroke-width="2" fill="none"/></svg></div>
<div style="position:absolute;left:1097px;top:1081.56px;width:19px;height:19px;box-sizing:border-box;border:2px solid #3c3c3c;background:#fff"></div>
<div style="position:absolute;left:1261.5px;top:1081.56px;width:19px;height:19px;box-sizing:border-box;border:2px solid #3c3c3c;background:#fff"></div>
<div style="position:absolute;left:1641px;top:1081.56px;width:19px;height:19px;box-sizing:border-box;border:2px solid #3c3c3c;background:#fff"></div>
<div style="position:absolute;left:1097px;top:1110.08px;width:19px;height:19px;box-sizing:border-box;border:2px solid #3c3c3c;background:#fff"></div>
<div style="position:absolute;left:1261.5px;top:1110.08px;width:19px;height:19px;box-sizing:border-box;border:2px solid #3c3c3c;background:#fff"></div>
<div style="position:absolute;left:1641px;top:1110.08px;width:19px;height:19px;box-sizing:border-box;border:2px solid #3c3c3c;background:#fff"></div>
<div style="position:absolute;left:1097px;top:1138.60px;width:19px;height:19px;box-sizing:border-box;border:2px solid #3c3c3c;background:#fff"></div>
<div style="position:absolute;left:1261.5px;top:1138.60px;width:19px;height:19px;box-sizing:border-box;border:2px solid #3c3c3c;background:#fff"></div>
<div style="position:absolute;left:1641px;top:1138.60px;width:19px;height:19px;box-sizing:border-box;border:2px solid #3c3c3c;background:#fff"></div>
<div style="position:absolute;left:1097px;top:1167.12px;width:19px;height:19px;box-sizing:border-box;border:2px solid #3c3c3c;background:#fff"></div>
<div style="position:absolute;left:1261.5px;top:1167.12px;width:19px;height:19px;box-sizing:border-box;border:2px solid #3c3c3c;background:#fff"></div>
<div style="position:absolute;left:1641px;top:1167.12px;width:19px;height:19px;box-sizing:border-box;border:2px solid #3c3c3c;background:#fff"></div>
<div style="position:absolute;left:1097px;top:1195.64px;width:19px;height:19px;box-sizing:border-box;border:2px solid #3c3c3c;background:#fff"></div>
<div style="position:absolute;left:1261.5px;top:1195.64px;width:19px;height:19px;box-sizing:border-box;border:2px solid #3c3c3c;background:#fff"></div>
<div style="position:absolute;left:1641px;top:1195.64px;width:19px;height:19px;box-sizing:border-box;border:2px solid #3c3c3c;background:#fff"></div>
<!-- horizontal scrollbar -->
<div class="a" style="left:0;top:1260px;width:2135px;height:23px;background:#f0f0f0"></div>
<svg class="a" style="left:5px;top:1264px" width="14" height="16" viewBox="0 0 14 16"><path d="M10 2.5 L4 8 L10 13.5" fill="none" stroke="#606060" stroke-width="2.4"/></svg>
<div class="a" style="left:25.8px;top:1261px;width:424px;height:21.5px;background:#cdcdcd"></div>
<svg class="a" style="left:2115px;top:1264px" width="14" height="16" viewBox="0 0 14 16"><path d="M4 2.5 L10 8 L4 13.5" fill="none" stroke="#606060" stroke-width="2.4"/></svg>
<!-- Показувати деталі -->
<div class="a" style="left:6px;top:1288px;width:19px;height:19px;box-sizing:border-box;border:2px solid #3c3c3c;background:#fff"></div>
<div class="a" style="left:28.7px;top:1286.5px;width:146.5px;height:22px;box-sizing:border-box;border:1.3px dotted #444"></div>
<!-- tabs -->
<div class="a" style="left:4.6px;top:1313.7px;width:187.2px;height:33.3px;box-sizing:border-box;border:2px solid #1c1c1c;background:#f0f0f0"></div>
<div class="a" style="left:195.5px;top:1313.7px;width:186.5px;height:33.3px;box-sizing:border-box;border:2px solid #2a86dc;background:#fdd0a2"></div>
<!-- status bar -->
<div class="a" style="left:0;top:1351px;width:2159px;height:1.5px;background:#d6d6d6"></div>
<div class="a" style="left:297px;top:1354px;width:1.5px;height:25px;background:#d2d2d2"></div>
<div class="a" style="left:603.6px;top:1354px;width:1.5px;height:25px;background:#d2d2d2"></div>
<div class="a" style="left:660.5px;top:1354px;width:1.5px;height:25px;background:#d2d2d2"></div>
<div class="a" style="left:1117.7px;top:1354px;width:1.5px;height:25px;background:#d2d2d2"></div>
<svg class="a" style="left:4px;top:1357px" width="20" height="21" viewBox="0 0 20 21">
 <defs><linearGradient id="dbg" x1="0" y1="0" x2="1" y2="1"><stop offset="0" stop-color="#b0b0e8"/><stop offset="1" stop-color="#5a5a90"/></linearGradient></defs>
 <path d="M0.8 1 H16.5 L18.5 3 V19 L16.5 20.5 H2.5 L0.8 19 Z" fill="url(#dbg)"/>
 <rect x="1" y="1.5" width="16" height="4" fill="#d8d8f4"/>
 <rect x="1" y="6.5" width="17.5" height="2.2" fill="#2a78d8"/><rect x="1" y="9.5" width="17.5" height="1.5" fill="#7aa8e0"/>
 <rect x="1" y="11.5" width="17.5" height="2.2" fill="#2a78d8"/><rect x="1" y="14.5" width="17.5" height="2" fill="#3a80d8"/>
</svg>
<svg class="a" style="left:303px;top:1356px" width="18" height="23" viewBox="0 0 18 23">
 <circle cx="6.2" cy="6.2" r="5.2" fill="#e8300a"/>
 <ellipse cx="9.5" cy="8.5" rx="4.8" ry="5.6" fill="#a8a8e4"/>
 <path d="M6.5 11 Q9.5 14.5 12.5 11 L12 13.5 Q9.5 15.5 7 13.5Z" fill="#eba050"/>
 <path d="M1.5 21.5 Q1 15 6 13.5 Q9.5 16.5 13 13.5 Q17.5 15 17 21.5 Q9 23.5 1.5 21.5Z" fill="#9b9be0"/>
 <path d="M6 17 Q9.5 19 13 17" stroke="#ececff" stroke-width="1.6" fill="none"/>
</svg>
<svg class="a" style="left:606px;top:1355px" width="22" height="23" viewBox="0 0 22 23">
 <path d="M2 10 L5 4.5 H13 L18.5 8 V20 H16 L14 15 L11 20 H9 L7 14 L4 20 H2 Z" fill="#8b8bd0"/>
 <path d="M4 4 H11" stroke="#b8b8ee" stroke-width="2"/>
 <path d="M12 1.5 L17 8" stroke="#555" stroke-width="1.3"/>
 <path d="M5 12 L3.2 17 L5.5 16.5 L4.2 21" stroke="#e9c020" stroke-width="2.2" fill="none"/>
 <path d="M12 15 L10.5 19 L12.5 18.5 L11.5 22" stroke="#e9b020" stroke-width="2.2" fill="none"/>
</svg>
<span class="t" style="left:31.30px;top:9.69px;font-size:18.6px;transform:scaleX(0.9522);">Скарб pro v. 4.0.2.83 [ІД</span>
<span class="t" style="left:264.40px;top:9.69px;font-size:18.6px;transform:scaleX(0.9512);">] - [Апт №003 смт.Баришівка, вул.Київський шлях,126а] - [Фірми]</span>
<span class="t" style="left:44.00px;top:41.29px;font-size:18.6px;color:#1a1a1a;">Довідник</span>
<span class="t" style="left:141.30px;top:41.29px;font-size:18.6px;color:#1a1a1a;transform:scaleX(0.9189);">Каса</span>
<span class="t" style="left:198.70px;top:41.29px;font-size:18.6px;color:#1a1a1a;">Документи</span>
<span class="t" style="left:311.40px;top:41.29px;font-size:18.6px;color:#1a1a1a;transform:scaleX(0.9934);">Платежі</span>
<span class="t" style="left:400.00px;top:41.29px;font-size:18.6px;color:#1a1a1a;transform:scaleX(1.0151);">Залишки</span>
<span class="t" style="left:497.30px;top:41.29px;font-size:18.6px;color:#1a1a1a;transform:scaleX(0.9722);">Замовлення</span>
<span class="t" style="left:620.50px;top:41.29px;font-size:18.6px;color:#1a1a1a;transform:scaleX(0.9505);">Сертифікати</span>
<span class="t" style="left:745.60px;top:41.29px;font-size:18.6px;color:#1a1a1a;transform:scaleX(0.9385);">Склад</span>
<span class="t" style="left:816.00px;top:41.29px;font-size:18.6px;color:#1a1a1a;transform:scaleX(0.9840);">Філії</span>
<span class="t" style="left:874.30px;top:41.29px;font-size:18.6px;color:#1a1a1a;transform:scaleX(0.9673);">Звіти</span>
<span class="t" style="left:936.90px;top:41.29px;font-size:18.6px;color:#1a1a1a;transform:scaleX(0.9922);">Довідники</span>
<span class="t" style="left:1043.90px;top:41.29px;font-size:18.6px;color:#1a1a1a;transform:scaleX(0.9549);">eHealth</span>
<span class="t" style="left:1126.60px;top:41.29px;font-size:18.6px;color:#1a1a1a;transform:scaleX(0.9555);">Налаштування</span>
<span class="t" style="left:1269.90px;top:41.29px;font-size:18.6px;color:#1a1a1a;transform:scaleX(0.9806);">Вікна</span>
<span class="t" style="left:1334.10px;top:41.29px;font-size:18.6px;color:#1a1a1a;transform:scaleX(0.9539);">Довідка</span>
<span class="t" style="left:7.30px;top:75.25px;font-size:45px;font-weight:bold;transform:scaleX(1.0075);">Фірми</span>
<span class="t" style="left:36.70px;top:133.68px;font-size:17.2px;color:#9a9ab6;transform:scaleX(0.9622);">Поиск (Tab)</span>
<span class="t" style="left:45.80px;top:169.52px;font-size:18.8px;color:#111;transform:scaleX(0.9755);">Додати</span>
<span class="t" style="left:148.40px;top:169.52px;font-size:18.8px;color:#111;transform:scaleX(0.9535);">Редагувати</span>
<span class="t" style="left:283.40px;top:169.52px;font-size:18.8px;color:#111;transform:scaleX(0.9892);">Видалити рядок</span>
<span class="t" style="left:461.60px;top:169.52px;font-size:18.8px;color:#111;transform:scaleX(1.0057);">Фільтр</span>
<span class="t" style="left:558.60px;top:169.52px;font-size:18.8px;color:#111;transform:scaleX(0.9823);">Загальний експорт</span>
<span class="t" style="left:760.10px;top:169.52px;font-size:18.8px;color:#111;transform:scaleX(1.0182);">Друк</span>
<span class="t" style="left:2061.00px;top:169.52px;font-size:18.8px;color:#111;transform:scaleX(0.9682);">Оновити</span>
<span class="t" style="left:12.10px;top:215.99px;font-size:19.3px;font-weight:bold;color:#111;transform:scaleX(1.0128);">Перетягніть заголовок колонки сюди для угруповання з цього стовпцю</span>
<span class="t" style="left:89.70px;top:258.08px;font-size:17.2px;color:#111;transform:scaleX(1.1148);">ІД</span>
<span class="t" style="left:392.60px;top:258.08px;font-size:17.2px;color:#111;transform:scaleX(0.9120);">Назва фірми</span>
<span class="t" style="left:733.70px;top:258.08px;font-size:17.2px;color:#111;transform:scaleX(0.9660);">Абревіатура</span>
<span class="t" style="left:844.60px;top:258.08px;font-size:17.2px;color:#111;transform:scaleX(0.9608);">Внутрішній штрих-код</span>
<span class="t" style="left:1074.00px;top:258.08px;font-size:17.2px;color:#111;transform:scaleX(0.9037);">Є філією</span>
<span class="t" style="left:1198.20px;top:258.08px;font-size:17.2px;color:#111;transform:scaleX(0.9596);">Страхова компанія</span>
<span class="t" style="left:1371.70px;top:258.08px;font-size:17.2px;color:#111;transform:scaleX(0.9484);">Головне підприємство</span>
<span class="t" style="left:1580.80px;top:258.08px;font-size:17.2px;color:#111;transform:scaleX(0.9536);">Є постачальником</span>
<span class="t" style="left:1838.80px;top:258.08px;font-size:17.2px;color:#111;transform:scaleX(0.9390);">Цінові умови</span>
<span class="t b" style="right:1978.90px;top:286.00px;font-size:16.7px;font-weight:bold;transform-origin:100% 0;transform:scaleX(1.1300);">6491</span>
<span class="t b" style="left:187.70px;top:286.00px;font-size:16.7px;font-weight:bold;transform:scaleX(0.9952);">ПЕРВИННА ПРОФСПІЛКОВА ОРГАНІЗАЦІЯ КОМУНАЛЬНОГО П...</span>
<span class="t b" style="left:844.80px;top:286.00px;font-size:16.7px;font-weight:bold;transform:scaleX(1.1300);">6865</span>
<div style="position:absolute;left:2031px;top:284px;width:104px;height:26px;overflow:hidden"><span class="t b" style="left:2.70px;top:2.00px;font-size:16.7px;font-weight:bold;transform:scaleX(1.0088)">ПЕРВИННА ПРОФСПІЛКОВА</span></div>
<span class="t b" style="right:1978.90px;top:314.52px;font-size:16.7px;font-weight:bold;transform-origin:100% 0;transform:scaleX(1.1300);">1204679</span>
<span class="t b" style="left:187.70px;top:314.52px;font-size:16.7px;font-weight:bold;transform:scaleX(0.9700);">ПЕРЕЯСЛАВ-ХМЕЛЬНИЦЬКИЙ ЗВІРОПЛЕМГОСП</span>
<span class="t b" style="left:1748.80px;top:314.52px;font-size:16.7px;font-weight:bold;transform:scaleX(1.1287);">Скидка 10%</span>
<div style="position:absolute;left:2031px;top:312px;width:104px;height:26px;overflow:hidden"><span class="t b" style="left:2.70px;top:2.52px;font-size:16.7px;font-weight:bold;transform:scaleX(1.0659)">Переяслав-Хмельницький</span></div>
<span class="t b" style="right:1978.90px;top:343.05px;font-size:16.7px;font-weight:bold;transform-origin:100% 0;transform:scaleX(1.1300);">1204696</span>
<span class="t b" style="left:187.70px;top:343.05px;font-size:16.7px;font-weight:bold;transform:scaleX(1.0101);">Переяслав-Хмельницький ЗВІРОПЛЕМГОСП</span>
<div style="position:absolute;left:2031px;top:341px;width:104px;height:26px;overflow:hidden"><span class="t b" style="left:2.70px;top:2.05px;font-size:16.7px;font-weight:bold;transform:scaleX(1.0659)">Переяслав-Хмельницький</span></div>
<span class="t b" style="right:1978.90px;top:371.56px;font-size:16.7px;font-weight:bold;transform-origin:100% 0;transform:scaleX(1.1300);">6492</span>
<span class="t b" style="left:187.70px;top:371.56px;font-size:16.7px;font-weight:bold;transform:scaleX(0.9748);">ПЕРЕЯСЛАВ-ХМЕЛЬНИЦЬКИЙ ЗВІРОПЛЕМГОСП КИЇВСЬКОЇ РЕ...</span>
<span class="t b" style="left:844.80px;top:371.56px;font-size:16.7px;font-weight:bold;transform:scaleX(1.1300);">6863</span>
<div style="position:absolute;left:2031px;top:369px;width:104px;height:26px;overflow:hidden"><span class="t b" style="left:2.70px;top:2.56px;font-size:16.7px;font-weight:bold;transform:scaleX(1.0052)">ПЕРЕЯСЛАВ-ХМЕЛЬНИЦЬКИЙ</span></div>
<span class="t b" style="right:1978.90px;top:400.08px;font-size:16.7px;font-weight:bold;transform-origin:100% 0;transform:scaleX(1.1300);">7358</span>
<span class="t b" style="left:187.70px;top:400.08px;font-size:16.7px;font-weight:bold;transform:scaleX(1.0333);">Перспективинвест ООО</span>
<span class="t b" style="left:844.80px;top:400.08px;font-size:16.7px;font-weight:bold;transform:scaleX(1.1300);">5362</span>
<div style="position:absolute;left:2031px;top:398px;width:104px;height:26px;overflow:hidden"><span class="t b" style="left:2.70px;top:2.08px;font-size:16.7px;font-weight:bold;transform:scaleX(1.0604)">Перспективинвест ООО</span></div>
<span class="t b" style="right:1978.90px;top:428.61px;font-size:16.7px;font-weight:bold;transform-origin:100% 0;transform:scaleX(1.1300);">6493</span>
<span class="t b" style="left:187.70px;top:428.61px;font-size:16.7px;font-weight:bold;transform:scaleX(1.0142);">Пилипчук Ирина</span>
<span class="t b" style="left:844.80px;top:428.61px;font-size:16.7px;font-weight:bold;transform:scaleX(1.1300);">5086</span>
<div style="position:absolute;left:2031px;top:426px;width:104px;height:26px;overflow:hidden"><span class="t b" style="left:2.70px;top:2.61px;font-size:16.7px;font-weight:bold;transform:scaleX(1.0727)">Пилипчук Ирина</span></div>
<span class="t b" style="right:1978.90px;top:457.12px;font-size:16.7px;font-weight:bold;transform-origin:100% 0;transform:scaleX(1.1300);">6494</span>
<span class="t b" style="left:187.70px;top:457.12px;font-size:16.7px;font-weight:bold;transform:scaleX(1.0504);">Пироженко И.В.</span>
<span class="t b" style="left:844.80px;top:457.12px;font-size:16.7px;font-weight:bold;transform:scaleX(1.1300);">5160</span>
<div style="position:absolute;left:2031px;top:455px;width:104px;height:26px;overflow:hidden"><span class="t b" style="left:2.70px;top:2.12px;font-size:16.7px;font-weight:bold;transform:scaleX(1.0951)">Пироженко И.В.</span></div>
<span class="t b" style="right:1978.90px;top:485.64px;font-size:16.7px;font-weight:bold;transform-origin:100% 0;transform:scaleX(1.1300);">6495</span>
<span class="t b" style="left:187.70px;top:485.64px;font-size:16.7px;font-weight:bold;transform:scaleX(1.0830);">Питеренко Дарья</span>
<span class="t b" style="left:844.80px;top:485.64px;font-size:16.7px;font-weight:bold;transform:scaleX(1.1300);">6395</span>
<div style="position:absolute;left:2031px;top:483px;width:104px;height:26px;overflow:hidden"><span class="t b" style="left:2.70px;top:2.64px;font-size:16.7px;font-weight:bold;transform:scaleX(1.0844)">Питеренко ,Дарья</span></div>
<span class="t b" style="right:1978.90px;top:514.16px;font-size:16.7px;font-weight:bold;transform-origin:100% 0;transform:scaleX(1.1300);">6496</span>
<span class="t b" style="left:187.70px;top:514.16px;font-size:16.7px;font-weight:bold;transform:scaleX(1.0830);">Питеренко Дарья</span>
<span class="t b" style="left:844.80px;top:514.16px;font-size:16.7px;font-weight:bold;transform:scaleX(1.1300);">6396</span>
<div style="position:absolute;left:2031px;top:512px;width:104px;height:26px;overflow:hidden"><span class="t b" style="left:2.70px;top:2.16px;font-size:16.7px;font-weight:bold;transform:scaleX(1.0844)">Питеренко ,Дарья</span></div>
<span class="t b" style="right:1978.90px;top:542.69px;font-size:16.7px;font-weight:bold;transform-origin:100% 0;transform:scaleX(1.1300);">6497</span>
<span class="t b" style="left:187.70px;top:542.69px;font-size:16.7px;font-weight:bold;transform:scaleX(1.0439);">Пицул Мария Георгиевна</span>
<span class="t b" style="left:844.80px;top:542.69px;font-size:16.7px;font-weight:bold;transform:scaleX(1.1300);">5669</span>
<div style="position:absolute;left:2031px;top:540px;width:104px;height:26px;overflow:hidden"><span class="t b" style="left:2.70px;top:2.69px;font-size:16.7px;font-weight:bold;transform:scaleX(1.0738)">Пицул Мария</span></div>
<span class="t b" style="right:1978.90px;top:571.21px;font-size:16.7px;font-weight:bold;transform-origin:100% 0;transform:scaleX(1.1300);">6498</span>
<span class="t b" style="left:187.70px;top:571.21px;font-size:16.7px;font-weight:bold;transform:scaleX(1.0571);">Північний регіональний центр страхового фонду докумен...</span>
<span class="t b" style="left:844.80px;top:571.21px;font-size:16.7px;font-weight:bold;transform:scaleX(1.1300);">6569</span>
<div style="position:absolute;left:2031px;top:569px;width:104px;height:26px;overflow:hidden"><span class="t b" style="left:2.70px;top:2.21px;font-size:16.7px;font-weight:bold;transform:scaleX(1.0738)">Північний регіональний</span></div>
<span class="t b" style="right:1978.90px;top:599.73px;font-size:16.7px;font-weight:bold;transform-origin:100% 0;transform:scaleX(1.1300);">6500</span>
<span class="t b" style="left:187.70px;top:599.73px;font-size:16.7px;font-weight:bold;transform:scaleX(1.0452);">Підприємство з іноземними інвестиціями "Макдональдз Ю...</span>
<span class="t b" style="left:844.80px;top:599.73px;font-size:16.7px;font-weight:bold;transform:scaleX(1.1300);">5631</span>
<div style="position:absolute;left:2031px;top:597px;width:104px;height:26px;overflow:hidden"><span class="t b" style="left:2.70px;top:2.73px;font-size:16.7px;font-weight:bold;transform:scaleX(1.0560)">Підприємство</span></div>
<span class="t b" style="right:1978.90px;top:628.25px;font-size:16.7px;font-weight:bold;transform-origin:100% 0;transform:scaleX(1.1300);">6501</span>
<span class="t b" style="left:187.70px;top:628.25px;font-size:16.7px;font-weight:bold;transform:scaleX(1.0301);">ПІДПРИЄМСТВО ЗІ 100% ІНОЗЕМНОЮ ІНВЕСТИЦІЄЮ ТОВАР...</span>
<span class="t b" style="left:844.80px;top:628.25px;font-size:16.7px;font-weight:bold;transform:scaleX(1.1300);">6862</span>
<div style="position:absolute;left:2031px;top:626px;width:104px;height:26px;overflow:hidden"><span class="t b" style="left:2.70px;top:2.25px;font-size:16.7px;font-weight:bold;transform:scaleX(0.9950)">ПІДПРИЄМСТВО</span></div>
<span class="t b" style="right:1978.90px;top:656.76px;font-size:16.7px;font-weight:bold;transform-origin:100% 0;transform:scaleX(1.1300);">6502</span>
<span class="t b" style="left:187.70px;top:656.76px;font-size:16.7px;font-weight:bold;transform:scaleX(1.0256);">ПІДПРИЄМСТВО ОБ`ЄДНАННЯ ГРОМАДЯН "МІЖНАРОДНА А...</span>
<span class="t b" style="left:844.80px;top:656.76px;font-size:16.7px;font-weight:bold;transform:scaleX(1.1300);">5438</span>
<div style="position:absolute;left:2031px;top:654px;width:104px;height:26px;overflow:hidden"><span class="t b" style="left:2.70px;top:2.76px;font-size:16.7px;font-weight:bold;transform:scaleX(0.9950)">ПІДПРИЄМСТВО</span></div>
<span class="t b" style="right:1978.90px;top:685.28px;font-size:16.7px;font-weight:bold;transform-origin:100% 0;transform:scaleX(1.1300);">6503</span>
<span class="t b" style="left:187.70px;top:685.28px;font-size:16.7px;font-weight:bold;transform:scaleX(1.1102);">ПІІ "МакДональдз Юкрейн Лтд"</span>
<span class="t b" style="left:844.80px;top:685.28px;font-size:16.7px;font-weight:bold;transform:scaleX(1.1300);">5817</span>
<div style="position:absolute;left:2031px;top:683px;width:104px;height:26px;overflow:hidden"><span class="t b" style="left:2.70px;top:2.28px;font-size:16.7px;font-weight:bold;transform:scaleX(1.0828)">ПІІ "МакДональдз</span></div>
<span class="t b" style="right:1978.90px;top:713.80px;font-size:16.7px;font-weight:bold;transform-origin:100% 0;transform:scaleX(1.1300);">6504</span>
<span class="t b" style="left:187.70px;top:713.80px;font-size:16.7px;font-weight:bold;transform:scaleX(1.0335);">Планета ГЕО  ЦІВД ТОВ</span>
<span class="t b" style="left:844.80px;top:713.80px;font-size:16.7px;font-weight:bold;transform:scaleX(1.1300);">4171</span>
<div style="position:absolute;left:2031px;top:711px;width:104px;height:26px;overflow:hidden"><span class="t b" style="left:2.70px;top:2.80px;font-size:16.7px;font-weight:bold;transform:scaleX(1.0616)">Планета ГЕО</span></div>
<span class="t b" style="right:1978.90px;top:742.32px;font-size:16.7px;font-weight:bold;transform-origin:100% 0;transform:scaleX(1.1300);">6505</span>
<span class="t b" style="left:187.70px;top:742.32px;font-size:16.7px;font-weight:bold;transform:scaleX(1.0056);">ПЛАНЕТА ДИТИНСТВА"ПРИВАТНИЙ ДОШКІЛЬНИЙ НАВЧАЛЬ...</span>
<span class="t b" style="left:844.80px;top:742.32px;font-size:16.7px;font-weight:bold;transform:scaleX(1.1300);">6402</span>
<div style="position:absolute;left:2031px;top:740px;width:104px;height:26px;overflow:hidden"><span class="t b" style="left:2.70px;top:2.32px;font-size:16.7px;font-weight:bold;transform:scaleX(1.0094)">ПРИВАТНИЙ ДОШКІЛЬНИЙ</span></div>
<span class="t b" style="right:1978.90px;top:770.84px;font-size:16.7px;font-weight:bold;transform-origin:100% 0;transform:scaleX(1.1300);">6506</span>
<span class="t b" style="left:187.70px;top:770.84px;font-size:16.7px;font-weight:bold;transform:scaleX(1.0347);">Планета Житло-Сервис ТОВ</span>
<span class="t b" style="left:844.80px;top:770.84px;font-size:16.7px;font-weight:bold;transform:scaleX(1.1300);">4103</span>
<div style="position:absolute;left:2031px;top:768px;width:104px;height:26px;overflow:hidden"><span class="t b" style="left:2.70px;top:2.84px;font-size:16.7px;font-weight:bold;transform:scaleX(1.0758)">Планета Житло-Сервис</span></div>
<span class="t b" style="right:1978.90px;top:799.37px;font-size:16.7px;font-weight:bold;transform-origin:100% 0;transform:scaleX(1.1300);">6507</span>
<span class="t b" style="left:187.70px;top:799.37px;font-size:16.7px;font-weight:bold;transform:scaleX(0.9973);">Пластик ПЄТ ООО</span>
<span class="t b" style="left:844.80px;top:799.37px;font-size:16.7px;font-weight:bold;transform:scaleX(1.1300);">3862</span>
<div style="position:absolute;left:2031px;top:797px;width:104px;height:26px;overflow:hidden"><span class="t b" style="left:2.70px;top:2.37px;font-size:16.7px;font-weight:bold;transform:scaleX(1.0638)">Пластик ПЄТ ООО</span></div>
<span class="t b" style="right:1978.90px;top:827.88px;font-size:16.7px;font-weight:bold;transform-origin:100% 0;transform:scaleX(1.1300);">6508</span>
<span class="t b" style="left:187.70px;top:827.88px;font-size:16.7px;font-weight:bold;transform:scaleX(1.0152);">Пластік ПЄТ ТОВ</span>
<span class="t b" style="left:844.80px;top:827.88px;font-size:16.7px;font-weight:bold;transform:scaleX(1.1300);">3873</span>
<div style="position:absolute;left:2031px;top:825px;width:104px;height:26px;overflow:hidden"><span class="t b" style="left:2.70px;top:2.88px;font-size:16.7px;font-weight:bold;transform:scaleX(1.0657)">Пластік ПЄТ ТОВ</span></div>
<span class="t b" style="right:1978.90px;top:856.40px;font-size:16.7px;font-weight:bold;transform-origin:100% 0;transform:scaleX(1.1300);">6509</span>
<span class="t b" style="left:187.70px;top:856.40px;font-size:16.7px;font-weight:bold;transform:scaleX(1.0563);">Племзавод " Яненківський"</span>
<span class="t b" style="left:844.80px;top:856.40px;font-size:16.7px;font-weight:bold;transform:scaleX(1.1300);">6076</span>
<div style="position:absolute;left:2031px;top:854px;width:104px;height:26px;overflow:hidden"><span class="t b" style="left:2.70px;top:2.40px;font-size:16.7px;font-weight:bold;transform:scaleX(1.1039)">ПАТ " Племзавод</span></div>
<span class="t b" style="right:1978.90px;top:884.92px;font-size:16.7px;font-weight:bold;transform-origin:100% 0;transform:scaleX(1.1300);">6510</span>
<span class="t b" style="left:187.70px;top:884.92px;font-size:16.7px;font-weight:bold;transform:scaleX(0.9843);">ПЛЕОН ТАЛАН</span>
<span class="t b" style="left:844.80px;top:884.92px;font-size:16.7px;font-weight:bold;transform:scaleX(1.1300);">4561</span>
<div style="position:absolute;left:2031px;top:882px;width:104px;height:26px;overflow:hidden"><span class="t b" style="left:2.70px;top:2.92px;font-size:16.7px;font-weight:bold;transform:scaleX(1.0100)">ДОЧІРНЄ ПІДПРИЄМСТВО</span></div>
<span class="t b" style="right:1978.90px;top:913.44px;font-size:16.7px;font-weight:bold;transform-origin:100% 0;transform:scaleX(1.1300);">6511</span>
<span class="t b" style="left:187.70px;top:913.44px;font-size:16.7px;font-weight:bold;transform:scaleX(1.0656);">Плеон Талан ДП</span>
<span class="t b" style="left:844.80px;top:913.44px;font-size:16.7px;font-weight:bold;transform:scaleX(1.1300);">3938</span>
<div style="position:absolute;left:2031px;top:911px;width:104px;height:26px;overflow:hidden"><span class="t b" style="left:2.70px;top:2.44px;font-size:16.7px;font-weight:bold;transform:scaleX(1.0836)">Плеон Талан ДП</span></div>
<span class="t b" style="right:1978.90px;top:941.97px;font-size:16.7px;font-weight:bold;transform-origin:100% 0;transform:scaleX(1.1300);">7359</span>
<span class="t b" style="left:187.70px;top:941.97px;font-size:16.7px;font-weight:bold;transform:scaleX(1.0034);">ПН Юкрейн ООО</span>
<span class="t b" style="left:844.80px;top:941.97px;font-size:16.7px;font-weight:bold;transform:scaleX(1.1300);">6381</span>
<div style="position:absolute;left:2031px;top:939px;width:104px;height:26px;overflow:hidden"><span class="t b" style="left:2.70px;top:2.97px;font-size:16.7px;font-weight:bold;transform:scaleX(1.0663)">ПН Юкрейн ООО</span></div>
<span class="t b" style="right:1978.90px;top:970.49px;font-size:16.7px;font-weight:bold;transform-origin:100% 0;transform:scaleX(1.1300);">6512</span>
<span class="t b" style="left:187.70px;top:970.49px;font-size:16.7px;font-weight:bold;transform:scaleX(1.0587);">ПНВК "Інтербізнес"</span>
<span class="t b" style="left:844.80px;top:970.49px;font-size:16.7px;font-weight:bold;transform:scaleX(1.1300);">6447</span>
<div style="position:absolute;left:2031px;top:968px;width:104px;height:26px;overflow:hidden"><span class="t b" style="left:2.70px;top:2.49px;font-size:16.7px;font-weight:bold;transform:scaleX(1.0744)">Приватна нерухомість</span></div>
<span class="t b" style="right:1978.90px;top:999.00px;font-size:16.7px;font-weight:bold;transform-origin:100% 0;transform:scaleX(1.1300);">7360</span>
<span class="t b" style="left:187.70px;top:999.00px;font-size:16.7px;font-weight:bold;">Повер Про ООО</span>
<span class="t b" style="left:844.80px;top:999.00px;font-size:16.7px;font-weight:bold;transform:scaleX(1.1300);">6821</span>
<div style="position:absolute;left:2031px;top:997px;width:104px;height:26px;overflow:hidden"><span class="t b" style="left:2.70px;top:2.00px;font-size:16.7px;font-weight:bold;transform:scaleX(1.0753)">Повер Про ООО</span></div>
<span class="t b" style="right:1978.90px;top:1027.53px;font-size:16.7px;font-weight:bold;transform-origin:100% 0;transform:scaleX(1.1300);">1206184</span>
<span class="t b" style="left:187.70px;top:1027.53px;font-size:16.7px;font-weight:bold;transform:scaleX(1.0140);">Повница Виктор Васильевич</span>
<span class="t b" style="left:844.80px;top:1027.53px;font-size:16.7px;font-weight:bold;transform:scaleX(1.1300);">2203330489844</span>
<span class="t b" style="left:1748.80px;top:1027.53px;font-size:16.7px;font-weight:bold;transform:scaleX(1.0964);">Скидка для сотрудника</span>
<span class="t b" style="right:1978.90px;top:1056.05px;font-size:16.7px;font-weight:bold;transform-origin:100% 0;transform:scaleX(1.1300);">7361</span>
<span class="t b" style="left:187.70px;top:1056.05px;font-size:16.7px;font-weight:bold;transform:scaleX(1.0715);">Подих життя МБФ Благодійна організація</span>
<span class="t b" style="left:844.80px;top:1056.05px;font-size:16.7px;font-weight:bold;transform:scaleX(1.1300);">6005</span>
<div style="position:absolute;left:2031px;top:1054px;width:104px;height:26px;overflow:hidden"><span class="t b" style="left:2.70px;top:2.05px;font-size:16.7px;font-weight:bold;transform:scaleX(1.0788)">Подих життя МБФ</span></div>
<span class="t b" style="right:1978.90px;top:1084.57px;font-size:16.7px;font-weight:bold;transform-origin:100% 0;transform:scaleX(1.1300);">6513</span>
<span class="t b" style="left:187.70px;top:1084.57px;font-size:16.7px;font-weight:bold;transform:scaleX(1.0674);">Поділля сельска Рада</span>
<span class="t b" style="left:844.80px;top:1084.57px;font-size:16.7px;font-weight:bold;transform:scaleX(1.1300);">3016</span>
<div style="position:absolute;left:2031px;top:1082px;width:104px;height:26px;overflow:hidden"><span class="t b" style="left:2.70px;top:2.57px;font-size:16.7px;font-weight:bold;transform:scaleX(1.0783)">Поділля сельска</span></div>
<span class="t b" style="right:1978.90px;top:1113.09px;font-size:16.7px;font-weight:bold;transform-origin:100% 0;transform:scaleX(1.1300);">6514</span>
<span class="t b" style="left:187.70px;top:1113.09px;font-size:16.7px;font-weight:bold;transform:scaleX(1.0441);">Поділлябудсервіс ТОВ</span>
<span class="t b" style="left:844.80px;top:1113.09px;font-size:16.7px;font-weight:bold;transform:scaleX(1.1300);">3018</span>
<div style="position:absolute;left:2031px;top:1111px;width:104px;height:26px;overflow:hidden"><span class="t b" style="left:2.70px;top:2.09px;font-size:16.7px;font-weight:bold;transform:scaleX(1.0576)">Поділлябудсервіс</span></div>
<span class="t b" style="right:1978.90px;top:1141.61px;font-size:16.7px;font-weight:bold;transform-origin:100% 0;transform:scaleX(1.1300);">6515</span>
<span class="t b" style="left:187.70px;top:1141.61px;font-size:16.7px;font-weight:bold;transform:scaleX(1.0704);">Подлубная Светлана</span>
<span class="t b" style="left:844.80px;top:1141.61px;font-size:16.7px;font-weight:bold;transform:scaleX(1.1300);">5449</span>
<span class="t b" style="right:1978.90px;top:1170.12px;font-size:16.7px;font-weight:bold;transform-origin:100% 0;transform:scaleX(1.1300);">6516</span>
<span class="t b" style="left:187.70px;top:1170.12px;font-size:16.7px;font-weight:bold;transform:scaleX(1.0693);">Подоляк Роман</span>
<span class="t b" style="left:844.80px;top:1170.12px;font-size:16.7px;font-weight:bold;transform:scaleX(1.1300);">5364</span>
<div style="position:absolute;left:2031px;top:1168px;width:104px;height:26px;overflow:hidden"><span class="t b" style="left:2.70px;top:2.12px;font-size:16.7px;font-weight:bold;transform:scaleX(1.0737)">Подоляк Роман</span></div>
<span class="t b" style="right:1978.90px;top:1198.64px;font-size:16.7px;font-weight:bold;transform-origin:100% 0;transform:scaleX(1.1300);">6517</span>
<span class="t b" style="left:187.70px;top:1198.64px;font-size:16.7px;font-weight:bold;transform:scaleX(1.0693);">Подоляк Роман</span>
<span class="t b" style="left:844.80px;top:1198.64px;font-size:16.7px;font-weight:bold;transform:scaleX(1.1300);">5371</span>
<div style="position:absolute;left:2031px;top:1196px;width:104px;height:26px;overflow:hidden"><span class="t b" style="left:2.70px;top:2.64px;font-size:16.7px;font-weight:bold;transform:scaleX(1.0737)">Подоляк Роман</span></div>
<span class="t b" style="left:189.60px;top:1235.81px;font-size:16.7px;font-weight:bold;transform:scaleX(1.0742);">Запис 1373 із 2252</span>
<span class="t" style="left:29.00px;top:1290.58px;font-size:17.2px;color:#111;transform:scaleX(0.9923);">Показувати деталі</span>
<span class="t" style="left:8.70px;top:1321.63px;font-size:16.2px;color:#111;transform:scaleX(1.0130);">Головна</span>
<span class="t" style="left:198.40px;top:1321.63px;font-size:16.2px;color:#111;transform:scaleX(0.9428);">Фірми</span>
<span class="t" style="left:30.00px;top:1358.94px;font-size:17.6px;color:#303030;transform:scaleX(0.9364);">База даних: TASA3@TITAN</span>
<span class="t" style="left:328.80px;top:1358.94px;font-size:17.6px;color:#303030;transform:scaleX(0.9144);">Користувач: GIFT</span>
<span class="t" style="left:634.40px;top:1358.94px;font-size:17.6px;color:#303030;transform:scaleX(1.0424);">2</span>
<span class="t" style="left:665.40px;top:1358.94px;font-size:17.6px;color:#303030;transform:scaleX(0.9456);">Кассовый аппарат не подключен</span>
<span class="t" style="left:1121.70px;top:1358.94px;font-size:17.6px;color:#303030;transform:scaleX(0.9348);">Зона: Склад [1]</span>
<!-- red arrow -->
<svg class="a" style="left:0;top:0;pointer-events:none" width="2159" height="1379" viewBox="0 0 2159 1379">
 <path d="M59.8 191.3 L78.6 195.5 Q79.2 196.2 78.4 197.2 L75.6 199.4 L492.4 530.5 L491.6 531.5 L71.2 204.8 L69.2 208 Q68.3 209 67.6 208 Z" fill="#f00"/>
</svg>
</body></html>
